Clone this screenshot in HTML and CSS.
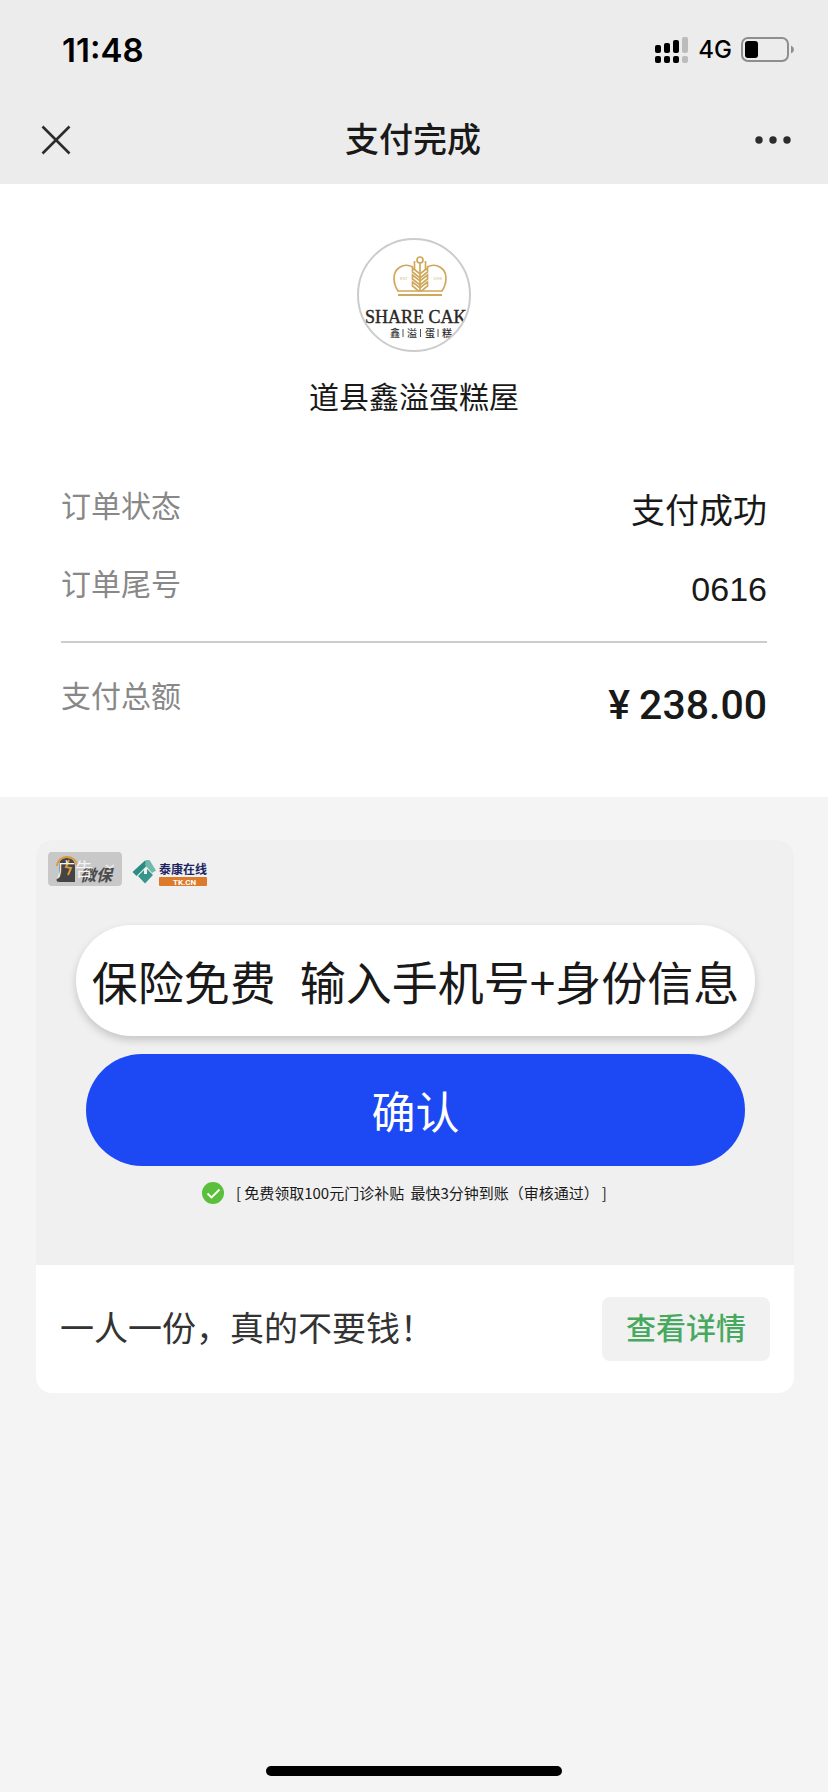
FILE: index.html
```html
<!DOCTYPE html>
<html lang="zh-CN">
<head>
<meta charset="utf-8">
<meta name="viewport" content="width=device-width, initial-scale=1">
<title>支付完成</title>
<link rel="stylesheet" href="styles.css">
</head>
<body>
<div class="page">
  <header class="top">
    <div class="status">
      <span class="time">11:48</span>
      <div class="status-right">
        <svg class="signal" width="34" height="26" viewBox="0 0 34 26" aria-hidden="true">
          <g fill="#000">
            <rect x="0" y="8" width="6" height="8" rx="2"/><rect x="9" y="6" width="6" height="10" rx="2"/><rect x="18" y="3" width="6" height="13" rx="2"/>
            <rect x="0" y="19" width="6" height="7" rx="2"/><rect x="9" y="19" width="6" height="7" rx="2"/><rect x="18" y="19" width="6" height="7" rx="2"/>
          </g>
          <g fill="#bcbcbc"><rect x="27" y="0" width="6" height="16" rx="2"/><rect x="27" y="19" width="6" height="7" rx="2"/></g>
        </svg>
        <span class="network">4G</span>
        <svg class="battery" width="54" height="26" viewBox="0 0 54 26" aria-hidden="true">
          <rect x="1" y="1" width="46" height="23" rx="6" fill="none" stroke="#8e8e8e" stroke-width="2"/>
          <rect x="4" y="4" width="13" height="17" rx="3" fill="#000"/>
          <path d="M50 8.500q3 1.500 3 4t-3 4z" fill="#8e8e8e"/>
        </svg>
      </div>
    </div>
    <nav class="nav">
      <button class="icon-btn" type="button" aria-label="关闭">
        <svg width="30" height="30" viewBox="0 0 30 30"><path d="M1.500 1.500l27 27M28.500 1.500l-27 27" stroke="#2c2c2c" stroke-width="2.600" fill="none"/></svg>
      </button>
      <h1 class="title">支付完成</h1>
      <button class="icon-btn" type="button" aria-label="更多">
        <svg width="36" height="30" viewBox="0 0 36 30" fill="#2c2c2c"><circle cx="4" cy="15" r="3.700"/><circle cx="18" cy="15" r="3.700"/><circle cx="32" cy="15" r="3.700"/></svg>
      </button>
    </nav>
  </header>

  <main>
    <section class="receipt">
      <div class="merchant">
        <svg class="logo" width="114" height="114" viewBox="0 0 114 114" role="img" aria-label="SHARE CAKE">
          <clipPath id="disc"><circle cx="57" cy="57" r="56"/></clipPath>
          <g clip-path="url(#disc)">
            <g fill="none" stroke="#d0a85c" stroke-width="1.700">
              <circle cx="63" cy="22" r="3"/>
              <path d="M63 25v27M57.500 23v9M68.500 23v9M56 29C46 24 37 31 37 40q0 7 4 13h44q4-6 4-13C89 31 80 24 70 29"/>
              <path d="M41 57h44" stroke-width="2.200"/>
              <path d="M55.500 30v4l7.500 6 7.500-6v-4L63 36zM55.500 37v4l7.500 6 7.500-6v-4L63 43zM55.500 44v4l6 5h3l6-5v-4L63 50z"/>
            </g>
            <text class="logo-year" x="43" y="42">EST</text><text class="logo-year" x="76" y="42">1998</text>
            <text class="logo-latin" x="8" y="85">SHARE CAK</text>
            <text class="logo-cn" x="33" y="99">鑫</text><text class="logo-cn" x="50" y="99">溢</text><text class="logo-cn" x="68" y="99">蛋</text><text class="logo-cn" x="85" y="99">糕</text>
            <path d="M46 91v8M63.500 91v8M81 91v8" stroke="#555" stroke-width="1"/>
          </g>
          <circle cx="57" cy="57" r="56" fill="none" stroke="#ccc" stroke-width="2"/>
        </svg>
        <h2 class="merchant-name">道县鑫溢蛋糕屋</h2>
      </div>
      <dl class="details">
        <div class="row"><dt>订单状态</dt><dd>支付成功</dd></div>
        <div class="row"><dt>订单尾号</dt><dd>0616</dd></div>
        <div class="row total"><dt>支付总额</dt><dd class="amount"><span class="yen">¥</span>238.00</dd></div>
      </dl>
    </section>

    <article class="card">
      <div class="banner">
        <div class="brands">
          <svg width="164" height="37" viewBox="0 0 164 37" role="img" aria-label="广告 微保 泰康在线">
            <rect x="0" y="2" width="74" height="34" rx="4" fill="#c8c8c8"/>
            <path d="M11 17C11 10 14 8 19 8s8 3 8 9v15H11z" fill="#444"/>
            <path d="M9 16C10 4 28 4 29 16" fill="none" stroke="#d99a3e" stroke-width="2"/>
            <path d="M21 10l-3 7 5 1-3 7" fill="none" stroke="#d99a3e" stroke-width="2"/>
            <path d="M9 31l6-4" stroke="#444" stroke-width="3"/>
            <text class="brand-weibao" x="32" y="31">微保</text>
            <text class="brand-ad" x="9" y="26">广告</text>
            <path d="M58 15l4 3 4-3" fill="none" stroke="#eee" stroke-width="1.500"/>
            <path d="M84.500 22L97 10.500l3.500 3.500-12 12z" fill="#2d8b83"/>
            <path d="M98 10l3.500 0 6.500 10.500-4 2.500-7-8z" fill="#6fbaad"/>
            <path d="M90 26l6-6v4h3v-5l6 6-8 8.500z" fill="#36968a"/>
            <text class="brand-taikang" x="111" y="24">泰康在线</text>
            <rect x="111" y="27" width="48" height="9" rx="1" fill="#dc7b2b"/>
            <text class="brand-tk" x="125" y="35">TK.CN</text>
          </svg>
        </div>
        <div class="prompt"><span>保险免费</span><span>输入手机号+身份信息</span></div>
        <button class="confirm" type="button">确认</button>
        <p class="note">
          <svg width="22" height="22" viewBox="0 0 22 22" aria-hidden="true"><circle cx="11" cy="11" r="11" fill="#5abf3b"/><path d="M5.500 11.500l4 4 8-8" fill="none" stroke="#fff" stroke-width="1.800"/></svg>
          <span class="note-text"><span>[</span><span>免费领取100元门诊补贴&nbsp;</span><span>最快3分钟到账（审核通过）</span><span>]</span></span>
        </p>
      </div>
      <footer class="card-foot">
        <p class="slogan">一人一份，真的不要钱！</p>
        <button class="more" type="button">查看详情</button>
      </footer>
    </article>
  </main>
  <div class="home-bar"></div>
</div>
</body>
</html>
```
FILE: styles.css
```css
* { box-sizing: border-box; }
body, h1, h2, p, dl, dd { margin: 0; }
body {
  background: #f4f4f4;
  color: #191919;
  font-family: "Liberation Sans", "Noto Sans CJK SC", sans-serif;
}
button { border: 0; padding: 0; background: none; font: inherit; }
svg { display: block; }

.page { min-height: 100vh; display: flex; flex-direction: column; }
main { flex: 1; }

.top { background: #ececec; }
.status {
  height: 100px;
  padding: 0 33px 0 62px;
  display: flex;
  align-items: center;
  justify-content: space-between;
}
.time { font: 600 33px/40px Inter, sans-serif; color: #000; }
.status-right { display: flex; align-items: center; gap: 9px; }
.network { font: 500 24px/32px Inter, sans-serif; color: #000; }

.nav {
  height: 84px;
  padding: 0 37px 4px 41px;
  display: flex;
  align-items: center;
  justify-content: space-between;
}
.icon-btn { display: flex; }
.title { font-size: 34px; line-height: 48px; font-weight: 500; }

.receipt { background: #fff; padding: 54px 61px 62px; }
.merchant { display: flex; flex-direction: column; align-items: center; gap: 24px; }
.merchant-name { font-size: 30px; line-height: 44px; font-weight: 400; }
.logo-latin { font: 400 18px "Liberation Serif", serif; fill: #2b2724; stroke: #2b2724; stroke-width: .4px; }
.logo-cn { font: 500 10px "Noto Sans CJK SC", sans-serif; fill: #333; }
.logo-year { font: 4px "Liberation Sans", sans-serif; fill: #d8bd85; }

.details { padding-top: 65px; }
.row { display: flex; justify-content: space-between; }
.row + .row { margin-top: 26px; }
.row dt { font-size: 30px; line-height: 44px; color: #888; }
.row dd { font-size: 34px; line-height: 52px; }
.row.total { margin-top: 26px; padding-top: 32px; border-top: 2px solid #ccc; }
.row dd.amount { font: 500 41px/60px Roboto, sans-serif; }
.yen { margin-right: 9px; }

.card { margin: 43px 34px 0 36px; border-radius: 16px; background: #fff; overflow: hidden; }
.banner {
  background: #f0f0f0;
  padding: 10px 39px 60px 40px;
  display: flex;
  flex-direction: column;
}
.brands { margin-left: -28px; margin-bottom: 38px; }
.brand-weibao { font: italic 700 16px "Noto Sans CJK SC", sans-serif; fill: #4a4a4a; }
.brand-ad { font: 18px "Noto Sans CJK SC", sans-serif; fill: #f4f4f4; }
.brand-taikang { font: 700 12px "Noto Sans CJK SC", sans-serif; fill: #1b2560; }
.brand-tk { font: 700 8px Roboto, sans-serif; fill: #fff; }
.prompt {
  height: 111px;
  border-radius: 56px;
  background: #fff;
  box-shadow: 0 4px 8px rgba(0, 0, 0, .18);
  display: flex;
  justify-content: center;
  gap: 24px;
  font: 400 46px/111px "Noto Sans CJK SC", sans-serif;
  white-space: nowrap;
}
.confirm {
  margin: 18px 10px 0;
  height: 112px;
  border-radius: 56px;
  background: #1c49f4;
  color: #fff;
  font: 400 44px/112px "Noto Sans CJK SC", sans-serif;
}
.note {
  margin-top: 15px;
  padding-right: 22px;
  display: flex;
  align-items: center;
  justify-content: center;
  gap: 12px;
  font: 400 15px/24px "Noto Sans CJK SC", sans-serif;
}
.note-text { display: flex; gap: 3px; }
.card-foot {
  height: 128px;
  padding: 0 24px;
  display: flex;
  align-items: center;
  justify-content: space-between;
}
.slogan { font-size: 34px; line-height: 48px; color: #333; }
.more {
  height: 64px;
  padding: 0 24px;
  border-radius: 8px;
  background: #f1f1f1;
  color: #47a95f;
  font-size: 30px;
  line-height: 62px;
  font-weight: 500;
}
.home-bar {
  width: 296px;
  height: 10px;
  margin: 0 auto 16px;
  border-radius: 5px;
  background: #000;
}
```
